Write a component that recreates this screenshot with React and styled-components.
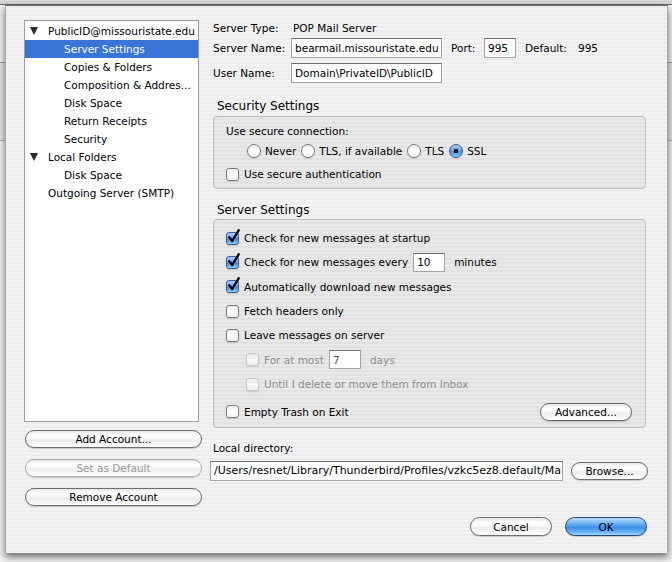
import React from 'react';
import styled, { createGlobalStyle, css } from 'styled-components';

const GlobalStyle = createGlobalStyle`
  html, body {
    margin: 0;
    padding: 0;
  }
  body {
    width: 672px;
    height: 562px;
    overflow: hidden;
    font-family: "DejaVu Sans", "Noto Sans", sans-serif;
    font-size: 10.5px;
    color: #000;
    background:
      linear-gradient(to bottom,
        #d9d9d9 0px, #cfcfcf 4px, #6a6a6a 4px, #6a6a6a 5px,
        #efefef 5px, #efefef 62px, #9a9a9a 62px, #9a9a9a 63px,
        #e2e2e2 63px, #e2e2e2 140px, #b5b5b5 140px, #b5b5b5 141px,
        #f2f2f2 141px);
  }
`;

const Dialog = styled.div`
  box-sizing: border-box;
  margin: 5px 0 0 5px;
  width: 663px;
  height: 548px;
  padding: 14px 20px 0 18px;
  border-top: 1px solid #6a6a6a;
  border-left: 1px solid #a8a8a8;
  border-right: 1px solid #a8a8a8;
  background: repeating-linear-gradient(
    to bottom,
    #ededed 0px,
    #ededed 2px,
    #f3f3f3 2px,
    #f3f3f3 4px
  );
  box-shadow: 0 4px 7px rgba(0, 0, 0, 0.55);
  display: flex;
  flex-direction: column;
`;

const Main = styled.div`
  display: flex;
  align-items: flex-start;
  gap: 10px;
`;

const LeftCol = styled.div`
  width: 179px;
  display: flex;
  flex-direction: column;
`;

const TreeBox = styled.div`
  box-sizing: border-box;
  width: 175px;
  height: 402px;
  border: 1px solid #9c9c9c;
  background: #fff;
  padding-top: 1px;
`;

const TreeRow = styled.div`
  height: 18px;
  display: flex;
  align-items: center;
  padding-left: ${({ $level }) => ($level ? 39 : 4)}px;
  white-space: nowrap;
  ${({ $selected }) =>
    $selected &&
    css`
      background: #3875d7;
      color: #fff;
    `}
`;

const Twisty = styled.span`
  width: 19px;
  flex: none;
  display: flex;
  align-items: center;
  &::before {
    content: '';
    display: ${({ $open }) => ($open ? 'block' : 'none')};
    margin-left: 1px;
    width: 0;
    height: 0;
    border-left: 4.5px solid transparent;
    border-right: 4.5px solid transparent;
    border-top: 8px solid #2a2a2a;
  }
`;

const PillButton = styled.button`
  box-sizing: border-box;
  height: ${({ $h }) => $h || 18}px;
  width: ${({ $w }) => $w}px;
  margin: ${({ $m }) => $m || 0};
  padding: 0;
  border-radius: 10px;
  font-family: inherit;
  font-size: 10.5px;
  color: ${({ disabled }) => (disabled ? '#9a9a9a' : '#000')};
  border: 1px solid ${({ disabled }) => (disabled ? '#b0b0b0' : '#6c6c6c')};
  background: linear-gradient(
    to bottom,
    #e6e6e6 0%,
    #ffffff 25%,
    #f7f7f7 50%,
    #ececec 55%,
    #f8f8f8 85%,
    #ffffff 100%
  );
  box-shadow: 0 1px 1px rgba(0, 0, 0, 0.18);
  flex: none;
`;

const DefaultButton = styled(PillButton)`
  border-color: #27427a;
  background: linear-gradient(
    to bottom,
    #b8dcfc 0%,
    #77b6f4 30%,
    #4c9aee 50%,
    #3d8ee8 55%,
    #6db5f8 85%,
    #a8dcff 100%
  );
`;

const LeftButtons = styled.div`
  display: flex;
  flex-direction: column;
  gap: 11px;
  margin-top: 8px;
  padding-left: 1px;
`;

const RightCol = styled.div`
  width: 433px;
  display: flex;
  flex-direction: column;
`;

const InfoRow = styled.div`
  display: flex;
  align-items: center;
  height: ${({ $h }) => $h || 20}px;
  margin-top: ${({ $mt }) => $mt || 0}px;
  white-space: nowrap;
`;

const Label = styled.span`
  flex: none;
  width: ${({ $w }) => ($w ? `${$w}px` : 'auto')};
  margin-left: ${({ $ml }) => $ml || 0}px;
`;

const TextField = styled.div`
  box-sizing: border-box;
  flex: none;
  width: ${({ $w }) => $w}px;
  height: ${({ $h }) => $h || 20}px;
  margin: ${({ $m }) => $m || 0};
  padding: 0 3px;
  display: flex;
  align-items: center;
  background: #fff;
  border: 1px solid #a4a4a4;
  border-top-color: #6e6e6e;
  white-space: nowrap;
  overflow: hidden;
  font-size: ${({ $fs }) => $fs || 10.5}px;
  color: ${({ $dim }) => ($dim ? '#555' : '#000')};
`;

const SectionTitle = styled.div`
  font-size: 12px;
  height: 16px;
  line-height: 16px;
  padding-left: 4px;
  margin-top: ${({ $mt }) => $mt}px;
`;

const GroupBox = styled.div`
  margin-top: ${({ $mt }) => $mt}px;
  border: 1px solid #bdbdbd;
  border-radius: 4px;
  background: rgba(0, 0, 0, 0.045);
  padding: ${({ $pad }) => $pad};
  display: flex;
  flex-direction: column;
`;

const OptionRow = styled.div`
  display: flex;
  align-items: center;
  height: ${({ $h }) => $h || 24.33}px;
  margin-top: ${({ $mt }) => $mt || 0}px;
  padding-left: ${({ $indent }) => $indent || 0}px;
  white-space: nowrap;
  color: ${({ $dim }) => ($dim ? '#8e8e8e' : '#000')};
`;

const Spacer = styled.div`
  flex: 1;
`;

const BoxMark = styled.span`
  position: relative;
  box-sizing: border-box;
  flex: none;
  width: 13px;
  height: 13px;
  margin-right: 5px;
  border-radius: 3px;
  border: 1px solid ${({ $on, $dim }) => ($on ? '#3c5f94' : $dim ? '#bdbdbd' : '#7c7c7c')};
  background: ${({ $on }) =>
    $on
      ? 'linear-gradient(to bottom, #a9d2f7 0%, #5ea3ec 45%, #4691e6 55%, #8fcaf8 100%)'
      : 'linear-gradient(to bottom, #ececec 0%, #ffffff 50%, #f2f2f2 100%)'};
  box-shadow: 0 1px 1px rgba(0, 0, 0, 0.15);
  opacity: ${({ $dim }) => ($dim ? 0.7 : 1)};
`;

const CheckGlyph = styled.svg`
  position: absolute;
  left: 0px;
  top: -4px;
  overflow: visible;
`;

const RadioMark = styled.span`
  box-sizing: border-box;
  flex: none;
  width: 14px;
  height: 14px;
  margin-right: 4px;
  border-radius: 50%;
  border: 1px solid ${({ $on }) => ($on ? '#3c5f94' : '#7c7c7c')};
  background: ${({ $on }) =>
    $on
      ? 'radial-gradient(circle at 50% 50%, #000 0 2px, transparent 2.5px), linear-gradient(to bottom, #a9d2f7 0%, #5ea3ec 45%, #4691e6 55%, #8fcaf8 100%)'
      : 'linear-gradient(to bottom, #ececec 0%, #ffffff 50%, #f2f2f2 100%)'};
  box-shadow: 0 1px 1px rgba(0, 0, 0, 0.15);
`;

const RadioOption = styled.span`
  display: flex;
  align-items: center;
  margin-right: 5px;
`;

const Footer = styled.div`
  display: flex;
  justify-content: flex-end;
  gap: 13px;
  margin-top: 11px;
`;

function Checkbox({ on, dim }) {
  return (
    <BoxMark $on={on} $dim={dim}>
      {on && (
        <CheckGlyph width="13" height="14" viewBox="0 0 13 14">
          <path d="M2.2 8.2 L5.2 12 L11.8 1.2" fill="none" stroke="#000" strokeWidth="2.3" strokeLinecap="round" strokeLinejoin="round" />
        </CheckGlyph>
      )}
    </BoxMark>
  );
}

const tree = [
  { label: 'PublicID@missouristate.edu', open: true },
  { label: 'Server Settings', level: 1, selected: true },
  { label: 'Copies & Folders', level: 1 },
  { label: 'Composition & Addres...', level: 1 },
  { label: 'Disk Space', level: 1 },
  { label: 'Return Receipts', level: 1 },
  { label: 'Security', level: 1 },
  { label: 'Local Folders', open: true },
  { label: 'Disk Space', level: 1 },
  { label: 'Outgoing Server (SMTP)' },
];

export default function App() {
  return (
    <>
      <GlobalStyle />
      <Dialog>
        <Main>
          <LeftCol>
            <TreeBox>
              {tree.map((item, i) => (
                <TreeRow key={i} $level={item.level} $selected={item.selected}>
                  {!item.level && <Twisty $open={item.open} />}
                  <span>{item.label}</span>
                </TreeRow>
              ))}
            </TreeBox>
            <LeftButtons>
              <PillButton $w={177}>Add Account...</PillButton>
              <PillButton $w={177} disabled>Set as Default</PillButton>
              <PillButton $w={177}>Remove Account</PillButton>
            </LeftButtons>
          </LeftCol>

          <RightCol>
            <InfoRow $h={16}>
              <Label $w={80}>Server Type:</Label>
              <span>POP Mail Server</span>
            </InfoRow>
            <InfoRow $mt={2}>
              <Label $w={78}>Server Name:</Label>
              <TextField $w={151}>bearmail.missouristate.edu</TextField>
              <Label $w={33} $ml={9}>Port:</Label>
              <TextField $w={32}>995</TextField>
              <Label $w={53} $ml={9}>Default:</Label>
              <span>995</span>
            </InfoRow>
            <InfoRow $mt={5}>
              <Label $w={78}>User Name:</Label>
              <TextField $w={151}>Domain\PrivateID\PublicID</TextField>
            </InfoRow>

            <SectionTitle $mt={15}>Security Settings</SectionTitle>
            <GroupBox $mt={2} $pad="6px 12px 5px 12px">
              <OptionRow $h={16}>Use secure connection:</OptionRow>
              <OptionRow $h={18} $mt={3} $indent={21}>
                <RadioOption><RadioMark />Never</RadioOption>
                <RadioOption><RadioMark />TLS, if available</RadioOption>
                <RadioOption><RadioMark />TLS</RadioOption>
                <RadioOption><RadioMark $on />SSL</RadioOption>
              </OptionRow>
              <OptionRow $h={18} $mt={5}>
                <Checkbox />
                Use secure authentication
              </OptionRow>
            </GroupBox>

            <SectionTitle $mt={13}>Server Settings</SectionTitle>
            <GroupBox $mt={1} $pad="6px 12px 3px 12px">
              <OptionRow>
                <Checkbox on />
                Check for new messages at startup
              </OptionRow>
              <OptionRow>
                <Checkbox on />
                Check for new messages every
                <TextField $w={32} $h={19} $m="0 9px 0 5px">10</TextField>
                minutes
              </OptionRow>
              <OptionRow>
                <Checkbox on />
                Automatically download new messages
              </OptionRow>
              <OptionRow>
                <Checkbox />
                Fetch headers only
              </OptionRow>
              <OptionRow>
                <Checkbox />
                Leave messages on server
              </OptionRow>
              <OptionRow $indent={20} $dim>
                <Checkbox dim />
                For at most
                <TextField $w={32} $h={19} $m="0 9px 0 5px" $dim>7</TextField>
                days
              </OptionRow>
              <OptionRow $indent={20} $dim>
                <Checkbox dim />
                Until I delete or move them from Inbox
              </OptionRow>
              <OptionRow $h={24} $mt={3.7}>
                <Checkbox />
                Empty Trash on Exit
                <Spacer />
                <PillButton $w={92} $m="0 1px 0 0">Advanced...</PillButton>
              </OptionRow>
            </GroupBox>

            <InfoRow $h={16} $mt={12}>
              <Label>Local directory:</Label>
            </InfoRow>
            <InfoRow $mt={5}>
              <TextField $w={353} $m="0 0 0 -3px" $fs={11}>
                /Users/resnet/Library/Thunderbird/Profiles/vzkc5ez8.default/Mail
              </TextField>
              <PillButton $w={77} $m="0 0 0 8px">Browse...</PillButton>
            </InfoRow>
          </RightCol>
        </Main>

        <Footer>
          <PillButton $w={82} $h={19}>Cancel</PillButton>
          <DefaultButton $w={82} $h={19}>OK</DefaultButton>
        </Footer>
      </Dialog>
    </>
  );
}
